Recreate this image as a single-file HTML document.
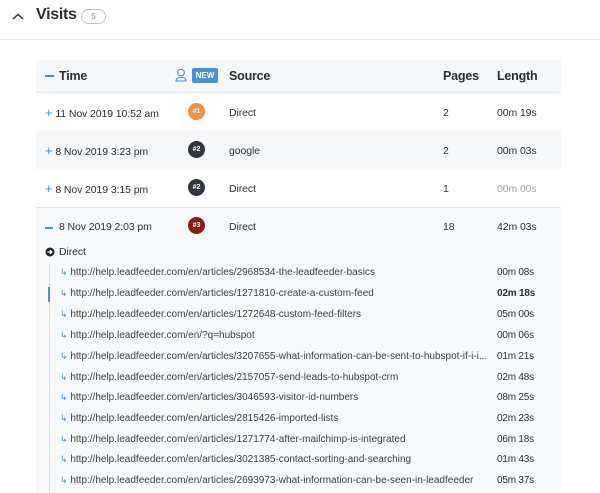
<!DOCTYPE html>
<html><head><style>
*{margin:0;padding:0;box-sizing:border-box}
body{width:600px;height:493px;overflow:hidden;background:#fff;font-family:"Liberation Sans",sans-serif;color:#2a2f36;position:relative}
.a{position:absolute;white-space:nowrap}
.hdr{font-size:12.5px;font-weight:bold;color:#2a2f36;letter-spacing:-0.2px}
.row{font-size:10.5px;letter-spacing:-0.1px}
.badge{position:absolute;width:17px;height:17px;border-radius:50%;color:#fff;font-size:7px;font-weight:bold;text-align:center;line-height:17px}
.u{font-size:10px;color:#3a3f45}
.d{font-size:10px;color:#2a2f36;letter-spacing:-0.2px}
.ar{color:#4a90d9;font-size:9px}
</style></head><body>
<svg class="a" style="left:12px;top:13px" width="12" height="8"><path d="M1 6 L6 1.5 L11 6" stroke="#2a2f36" stroke-width="1.5" fill="none"/></svg>
<div class="a" style="left:36px;top:6px;font-size:16px;font-weight:bold;letter-spacing:-0.3px">Visits</div>
<div class="a" style="left:81px;top:9px;width:25px;height:15px;border:1px solid #b8c0c8;border-radius:8px;font-size:8px;color:#7a8590;text-align:center;line-height:13px">5</div>
<div class="a" style="left:0;top:39px;width:600px;height:1px;background:#e4e7ea"></div>

<div class="a" style="left:36px;top:60px;width:525px;height:33px;background:#f6f7f8;border-bottom:1px solid #e2e5e8"></div>
<div class="a" style="left:45px;top:75px;width:9px;height:2px;background:#3d8fd6"></div>
<div class="a hdr" style="left:59px;top:69px">Time</div>
<svg class="a" style="left:175px;top:68px" width="12" height="14"><circle cx="6" cy="4.5" r="3.3" stroke="#4a90d9" fill="none" stroke-width="1.1"/><path d="M1 13 C1 8 11 8 11 13 Z" stroke="#4a90d9" fill="none" stroke-width="1.1"/></svg>
<div class="a" style="left:192px;top:68px;width:26px;height:15px;background:#4a90d9;border-radius:2px;color:#fff;font-size:8px;font-weight:bold;text-align:center;line-height:15px">NEW</div>
<div class="a hdr" style="left:229px;top:69px">Source</div>
<div class="a hdr" style="left:443px;top:69px">Pages</div>
<div class="a hdr" style="left:497px;top:69px">Length</div>

<div class="a" style="left:36px;top:131px;width:525px;height:38px;background:#f6f7f8"></div>
<div class="a" style="left:36px;top:207px;width:525px;height:286px;background:#f8f9fa;border-top:1px solid #e2e5e8"></div>

<div class="a row" style="left:45px;top:105px"><span style="color:#3d8fd6;font-size:13px">+</span>&nbsp;11 Nov 2019 10:52 am</div>
<div class="badge" style="left:188px;top:103px;background:#f0904a">#1</div>
<div class="a row" style="left:229px;top:107px">Direct</div>
<div class="a row" style="left:443px;top:107px">2</div>
<div class="a row" style="left:497px;top:107px">00m 19s</div>

<div class="a row" style="left:45px;top:143px"><span style="color:#3d8fd6;font-size:13px">+</span>&nbsp;8 Nov 2019 3:23 pm</div>
<div class="badge" style="left:188px;top:141px;background:#2f3640">#2</div>
<div class="a row" style="left:229px;top:145px">google</div>
<div class="a row" style="left:443px;top:145px">2</div>
<div class="a row" style="left:497px;top:145px">00m 03s</div>

<div class="a row" style="left:45px;top:181px"><span style="color:#3d8fd6;font-size:13px">+</span>&nbsp;8 Nov 2019 3:15 pm</div>
<div class="badge" style="left:188px;top:179px;background:#2f3640">#2</div>
<div class="a row" style="left:229px;top:183px">Direct</div>
<div class="a row" style="left:443px;top:183px">1</div>
<div class="a row" style="left:497px;top:183px;color:#a0a6ac">00m 00s</div>

<div class="a" style="left:45px;top:227px;width:8px;height:2px;background:#3d8fd6"></div>
<div class="a row" style="left:59px;top:221px">8 Nov 2019 2:03 pm</div>
<div class="badge" style="left:188px;top:217px;background:#8b1d15">#3</div>
<div class="a row" style="left:229px;top:221px">Direct</div>
<div class="a row" style="left:443px;top:221px">18</div>
<div class="a row" style="left:497px;top:221px">42m 03s</div>

<svg class="a" style="left:45px;top:247px" width="10" height="10"><circle cx="5" cy="5" r="4.5" fill="#1e2228"/><path d="M2.5 5 H6.5 M5 3 L7 5 L5 7" stroke="#fff" stroke-width="1.2" fill="none"/></svg>
<div class="a row" style="left:59px;top:246px">Direct</div>
<div class="a" style="left:49px;top:263px;width:1px;height:230px;background:#dcdfe2"></div>
<div class="a" style="left:48px;top:287px;width:2px;height:15px;background:#4a90d9"></div>

<div class="a u" style="left:60px;top:267px"><span class="ar">↳</span> http://help.leadfeeder.com/en/articles/2968534-the-leadfeeder-basics</div><div class="a d" style="left:497px;top:267px">00m 08s</div>
<div class="a u" style="left:60px;top:288px"><span class="ar">↳</span> http://help.leadfeeder.com/en/articles/1271810-create-a-custom-feed</div><div class="a d" style="left:497px;top:288px;font-weight:bold">02m 18s</div>
<div class="a u" style="left:60px;top:309px"><span class="ar">↳</span> http://help.leadfeeder.com/en/articles/1272648-custom-feed-filters</div><div class="a d" style="left:497px;top:309px">05m 00s</div>
<div class="a u" style="left:60px;top:330px"><span class="ar">↳</span> http://help.leadfeeder.com/en/?q=hubspot</div><div class="a d" style="left:497px;top:330px">00m 06s</div>
<div class="a u" style="left:60px;top:351px"><span class="ar">↳</span> http://help.leadfeeder.com/en/articles/3207655-what-information-can-be-sent-to-hubspot-if-i-i...</div><div class="a d" style="left:497px;top:351px">01m 21s</div>
<div class="a u" style="left:60px;top:372px"><span class="ar">↳</span> http://help.leadfeeder.com/en/articles/2157057-send-leads-to-hubspot-crm</div><div class="a d" style="left:497px;top:372px">02m 48s</div>
<div class="a u" style="left:60px;top:392px"><span class="ar">↳</span> http://help.leadfeeder.com/en/articles/3046593-visitor-id-numbers</div><div class="a d" style="left:497px;top:392px">08m 25s</div>
<div class="a u" style="left:60px;top:413px"><span class="ar">↳</span> http://help.leadfeeder.com/en/articles/2815426-imported-lists</div><div class="a d" style="left:497px;top:413px">02m 23s</div>
<div class="a u" style="left:60px;top:434px"><span class="ar">↳</span> http://help.leadfeeder.com/en/articles/1271774-after-mailchimp-is-integrated</div><div class="a d" style="left:497px;top:434px">06m 18s</div>
<div class="a u" style="left:60px;top:454px"><span class="ar">↳</span> http://help.leadfeeder.com/en/articles/3021385-contact-sorting-and-searching</div><div class="a d" style="left:497px;top:454px">01m 43s</div>
<div class="a u" style="left:60px;top:475px"><span class="ar">↳</span> http://help.leadfeeder.com/en/articles/2693973-what-information-can-be-seen-in-leadfeeder</div><div class="a d" style="left:497px;top:475px">05m 37s</div>
</body></html>
